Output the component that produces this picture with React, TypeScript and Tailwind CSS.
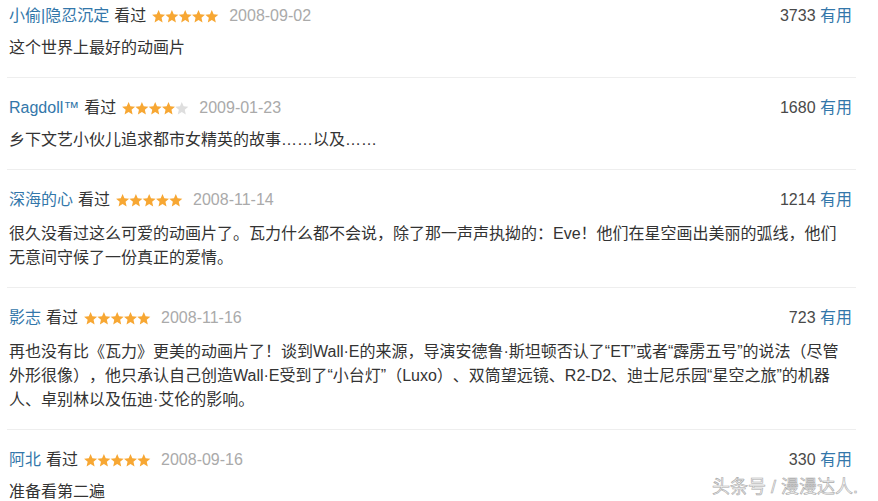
interface Review {
  name: string
  stars: number
  date: string
  votes: string
  lines: string[]
}

const reviews: Review[] = [
  {
    name: '小偷|隐忍沉定',
    stars: 5,
    date: '2008-09-02',
    votes: '3733',
    lines: ['这个世界上最好的动画片'],
  },
  {
    name: 'Ragdoll™',
    stars: 4,
    date: '2009-01-23',
    votes: '1680',
    lines: ['乡下文艺小伙儿追求都市女精英的故事……以及……'],
  },
  {
    name: '深海的心',
    stars: 5,
    date: '2008-11-14',
    votes: '1214',
    lines: [
      '很久没看过这么可爱的动画片了。瓦力什么都不会说，除了那一声声执拗的：Eve！他们在星空画出美丽的弧线，他们',
      '无意间守候了一份真正的爱情。',
    ],
  },
  {
    name: '影志',
    stars: 5,
    date: '2008-11-16',
    votes: '723',
    lines: [
      '再也没有比《瓦力》更美的动画片了！谈到Wall·E的来源，导演安德鲁·斯坦顿否认了“ET”或者“霹雳五号”的说法（尽管',
      '外形很像），他只承认自己创造Wall·E受到了“小台灯”（Luxo）、双筒望远镜、R2-D2、迪士尼乐园“星空之旅”的机器',
      '人、卓别林以及伍迪·艾伦的影响。',
    ],
  },
  {
    name: '阿北',
    stars: 5,
    date: '2008-09-16',
    votes: '330',
    lines: ['准备看第二遍'],
  },
]

// chunky five-point star, ~13px cell
const STAR =
  'M6.6 0L8.42 4.3L13.1 4.7L9.55 7.8L10.6 12.4L6.6 10L2.6 12.4L3.65 7.8L0.1 4.7L4.78 4.3Z'

function Stars({ count }: { count: number }) {
  return (
    <svg width="67" height="13" viewBox="0 0 67 13" className="shrink-0">
      {[0, 1, 2, 3, 4].map((i) => (
        <path
          key={i}
          d={STAR}
          transform={`translate(${i * 13.3} 0)`}
          fill={i < count ? '#f7a733' : '#dedede'}
        />
      ))}
    </svg>
  )
}

function ReviewItem({ review, first, last }: { review: Review; first: boolean; last: boolean }) {
  return (
    <div
      className={`${first ? 'pt-[4px]' : 'pt-[18px]'} ${last ? '' : 'pb-[17px] border-b border-[#eeeeee]'}`}
    >
      <div className="flex items-center h-6 px-[2px] pr-[4px]">
        <span className="text-[#3377aa]">{review.name}</span>
        <span className="ml-[5px] text-[#333]">看过</span>
        <span className="ml-[6px] flex items-center">
          <Stars count={review.stars} />
        </span>
        <span className="ml-[10px] text-[#aaaaaa]">{review.date}</span>
        <span className="ml-auto text-[#494949]">
          {review.votes} <span className="text-[#3377aa]">有用</span>
        </span>
      </div>
      <div className={`${review.lines.length > 1 ? 'mt-[10px]' : 'mt-[8px]'} px-[2px] text-[#333] leading-6`}>
        {review.lines.map((line, i) => (
          <div key={i} className="whitespace-nowrap">
            {line}
          </div>
        ))}
      </div>
    </div>
  )
}

export default function App() {
  return (
    <div
      className="relative w-[878px] h-[501px] overflow-hidden bg-white text-[16px] leading-6 [text-spacing-trim:space-all]"
      style={{ fontFamily: '"Liberation Sans", "Noto Sans CJK SC", sans-serif' }}
    >
      <div className="ml-[7px] w-[849px]">
        {reviews.map((r, i) => (
          <ReviewItem key={r.name} review={r} first={i === 0} last={i === reviews.length - 1} />
        ))}
      </div>
      <div className="absolute right-[20px] bottom-[5px] text-[18px] leading-none text-[#f6f6f6] [-webkit-text-stroke:0.6px_#a8a8a8]">
        头条号 / 漫漫达人.
      </div>
    </div>
  )
}
